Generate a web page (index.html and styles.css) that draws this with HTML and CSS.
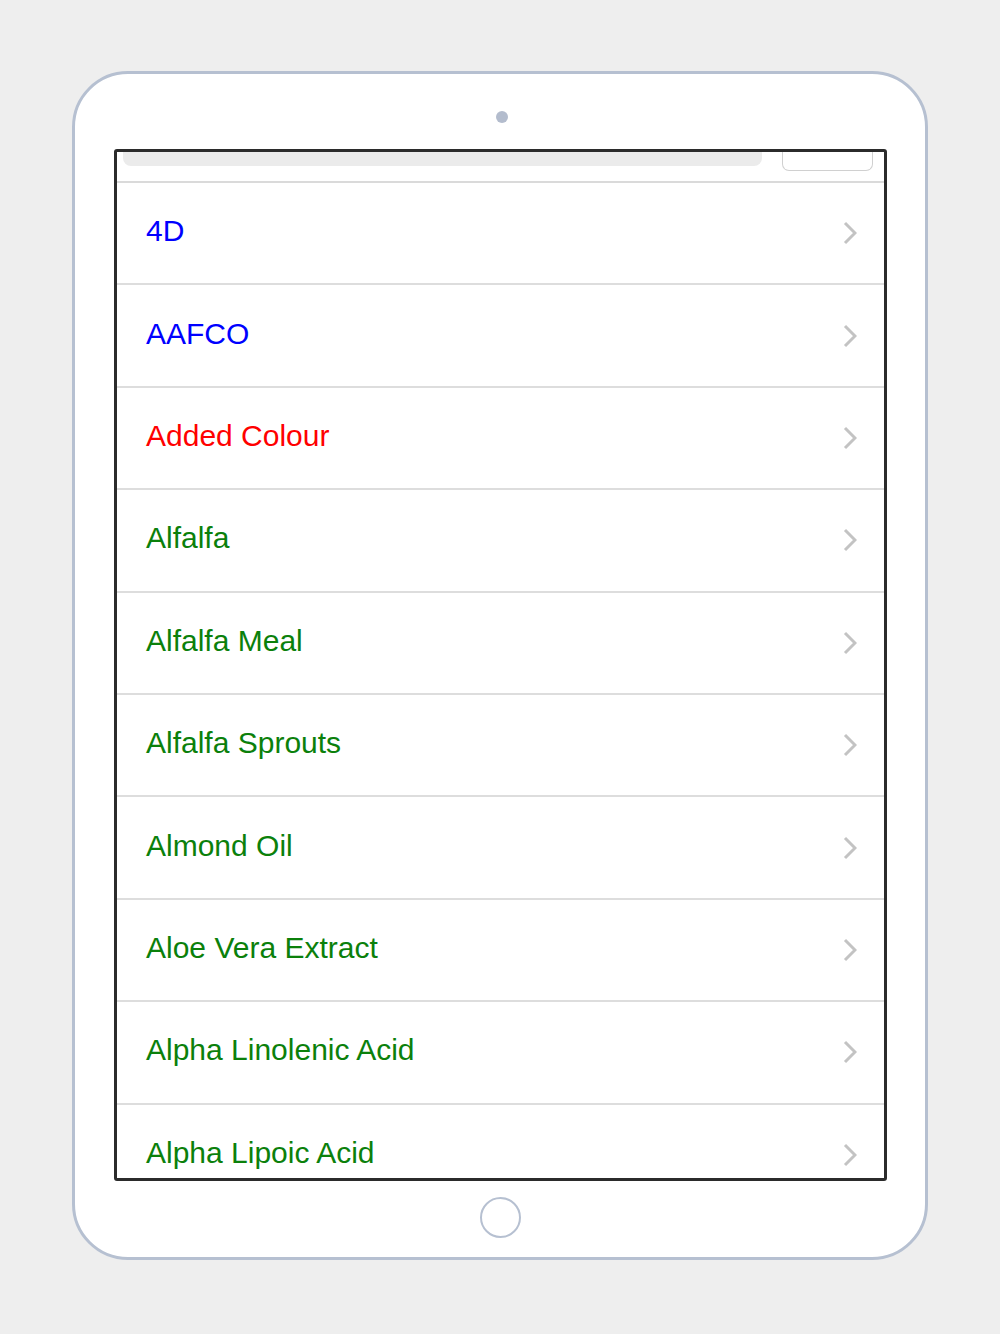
FILE: index.html
```html
<!DOCTYPE html>
<html>
<head>
<meta charset="utf-8">
<link rel="stylesheet" href="styles.css">
</head>
<body>
<div class="device">
  <div class="camera"></div>
  <div class="screen">
    <div class="topbar">
      <div class="search"></div>
      <div class="btn"></div>
    </div>
    <ul class="list">
      <li class="row blue"><span>4D</span><svg class="chev" viewBox="0 0 14 24"><path d="M2 2 L12 12 L2 22"/></svg></li>
      <li class="row blue"><span>AAFCO</span><svg class="chev" viewBox="0 0 14 24"><path d="M2 2 L12 12 L2 22"/></svg></li>
      <li class="row red"><span>Added Colour</span><svg class="chev" viewBox="0 0 14 24"><path d="M2 2 L12 12 L2 22"/></svg></li>
      <li class="row green"><span>Alfalfa</span><svg class="chev" viewBox="0 0 14 24"><path d="M2 2 L12 12 L2 22"/></svg></li>
      <li class="row green"><span>Alfalfa Meal</span><svg class="chev" viewBox="0 0 14 24"><path d="M2 2 L12 12 L2 22"/></svg></li>
      <li class="row green"><span>Alfalfa Sprouts</span><svg class="chev" viewBox="0 0 14 24"><path d="M2 2 L12 12 L2 22"/></svg></li>
      <li class="row green"><span>Almond Oil</span><svg class="chev" viewBox="0 0 14 24"><path d="M2 2 L12 12 L2 22"/></svg></li>
      <li class="row green"><span>Aloe Vera Extract</span><svg class="chev" viewBox="0 0 14 24"><path d="M2 2 L12 12 L2 22"/></svg></li>
      <li class="row green"><span>Alpha Linolenic Acid</span><svg class="chev" viewBox="0 0 14 24"><path d="M2 2 L12 12 L2 22"/></svg></li>
      <li class="row green"><span>Alpha Lipoic Acid</span><svg class="chev" viewBox="0 0 14 24"><path d="M2 2 L12 12 L2 22"/></svg></li>
    </ul>
  </div>
  <div class="home"></div>
</div>
</body>
</html>
```
FILE: styles.css
```css
html, body {
  margin: 0;
  padding: 0;
}
body {
  background: #eeeeee;
  width: 1000px;
  height: 1334px;
  overflow: hidden;
  font-family: "Liberation Sans", Arial, sans-serif;
}
.device {
  box-sizing: border-box;
  margin: 71px 0 0 72px;
  width: 856px;
  height: 1189px;
  border: 3px solid #b6c0d1;
  border-radius: 56px;
  background: #ffffff;
  display: flex;
  flex-direction: column;
  align-items: center;
}
.camera {
  margin-top: 37px;
  width: 12px;
  height: 12px;
  border-radius: 50%;
  background: #b3bccd;
  margin-left: 3px;
}
.screen {
  box-sizing: border-box;
  margin-top: 26px;
  align-self: flex-start;
  margin-left: 39px;
  width: 773px;
  height: 1032px;
  border: 3px solid #2b2b2b;
  border-radius: 3px;
  overflow: hidden;
  background: #fff;
}
.topbar {
  height: 29px;
  border-bottom: 2px solid #dadada;
  display: flex;
  align-items: flex-start;
}
.search {
  margin-left: 6px;
  width: 639px;
  height: 14px;
  background: #ebebeb;
  border-radius: 0 0 8px 8px;
}
.btn {
  box-sizing: border-box;
  margin-left: 20px;
  width: 91px;
  height: 19px;
  border: 1.5px solid #d0d0d0;
  border-top: none;
  border-radius: 0 0 7px 7px;
}
.list {
  list-style: none;
  margin: 0;
  padding: 0;
}
.row {
  height: 100.4px;
  border-bottom: 2px solid #dddddd;
  display: flex;
  align-items: center;
  justify-content: space-between;
  padding: 0 27px 0 29px;
  font-size: 30px;
}
.row span {
  margin-top: -4px;
}
.blue { color: #0000ff; }
.red { color: #ff0000; }
.green { color: #0b800b; }
.chev {
  width: 14px;
  height: 24px;
  fill: none;
  stroke: #c3c3c3;
  stroke-width: 3;
}
.home {
  margin-top: 16px;
  box-sizing: border-box;
  width: 41px;
  height: 41px;
  border: 2.5px solid #b6c0d1;
  border-radius: 50%;
}
```
